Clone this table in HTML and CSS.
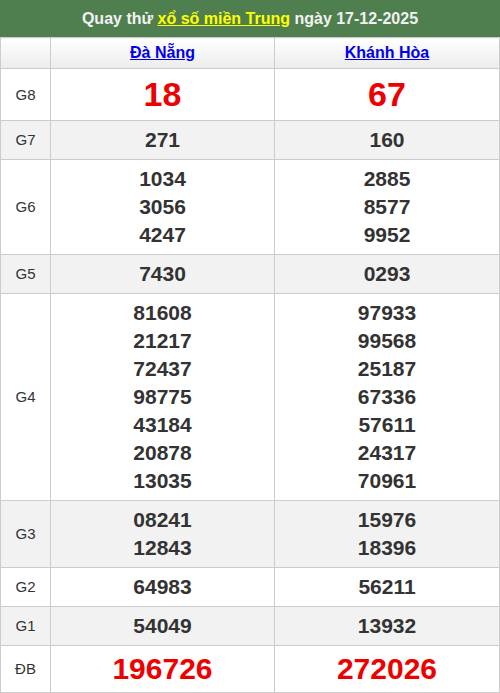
FILE: index.html
```html
<!DOCTYPE html>
<html lang="vi">
<head>
<meta charset="utf-8">
<link rel="stylesheet" href="styles.css">
</head>
<body>
<div class="box">
  <div class="title">Quay thử <a href="#" class="title-link">xổ số miền Trung</a> ngày 17-12-2025</div>
  <table class="kq">
    <colgroup><col class="c-label"><col class="c-prov1"><col class="c-prov2"></colgroup>
    <thead>
      <tr class="head">
        <th></th>
        <th><a href="#">Đà Nẵng</a></th>
        <th><a href="#">Khánh Hòa</a></th>
      </tr>
    </thead>
    <tbody>
      <tr class="g8"><td class="lbl">G8</td><td class="num big">18</td><td class="num big">67</td></tr>
      <tr class="alt"><td class="lbl">G7</td><td class="num">271</td><td class="num">160</td></tr>
      <tr><td class="lbl">G6</td><td class="num">1034<br>3056<br>4247</td><td class="num">2885<br>8577<br>9952</td></tr>
      <tr class="alt"><td class="lbl">G5</td><td class="num">7430</td><td class="num">0293</td></tr>
      <tr><td class="lbl">G4</td><td class="num">81608<br>21217<br>72437<br>98775<br>43184<br>20878<br>13035</td><td class="num">97933<br>99568<br>25187<br>67336<br>57611<br>24317<br>70961</td></tr>
      <tr class="alt"><td class="lbl">G3</td><td class="num">08241<br>12843</td><td class="num">15976<br>18396</td></tr>
      <tr><td class="lbl">G2</td><td class="num">64983</td><td class="num">56211</td></tr>
      <tr class="alt"><td class="lbl">G1</td><td class="num">54049</td><td class="num">13932</td></tr>
      <tr class="db"><td class="lbl">ĐB</td><td class="num special">196726</td><td class="num special">272026</td></tr>
    </tbody>
  </table>
</div>
</body>
</html>
```
FILE: styles.css
```css
html, body {
  margin: 0;
  padding: 0;
  background: #fff;
  font-family: "Liberation Sans", Arial, sans-serif;
}
.box {
  width: 500px;
}
.title {
  background: #4f7f4f;
  color: #f2f2f2;
  font-weight: bold;
  font-size: 16px;
  text-align: center;
  height: 37px;
  line-height: 37px;
}
.title-link {
  color: #ffff00;
  text-decoration: underline;
}
.kq {
  width: 500px;
  border-collapse: collapse;
  table-layout: fixed;
  color: #333;
}
.c-label { width: 50px; }
.c-prov1 { width: 224px; }
.kq th, .kq td {
  border: 1px solid #ccc;
  text-align: center;
  padding: 5px 0;
}
.head th {
  background: linear-gradient(#fff, #ececec);
  height: 20px;
  font-size: 16px;
  font-weight: bold;
  line-height: 20px;
}
.head th a {
  color: #0000ee;
  text-decoration: underline;
}
.lbl {
  font-size: 15px;
  line-height: 28px;
}
.num {
  font-size: 21px;
  font-weight: bold;
  line-height: 28px;
}
.alt td {
  background: #f2f2f2;
}
.big {
  font-size: 34px;
  line-height: 41px;
  color: #ee0000;
}
.special {
  font-size: 30px;
  line-height: 36px;
  color: #ee0000;
}
```
